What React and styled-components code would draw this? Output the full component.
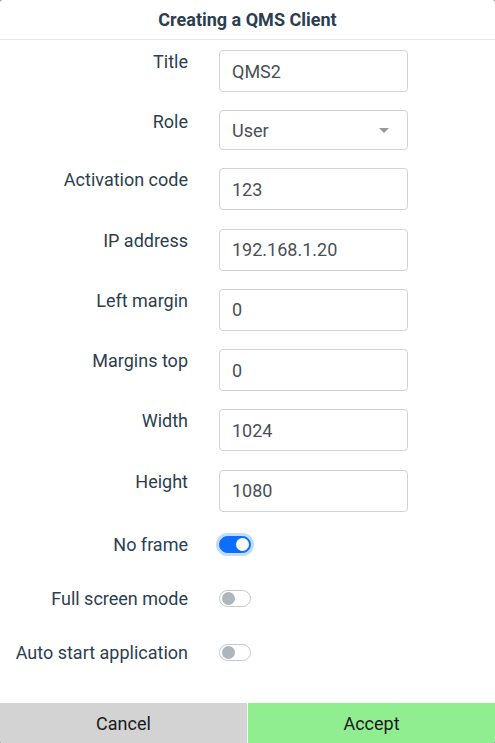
import React from 'react';
import styled, { createGlobalStyle } from 'styled-components';

const GlobalStyle = createGlobalStyle`
  html, body {
    margin: 0;
    padding: 0;
    background: #9a9a9a;
  }
  body {
    font-family: Roboto, "Liberation Sans", sans-serif;
    color: #2c3e50;
  }
  * {
    box-sizing: border-box;
  }
`;

// Styled components
const Card = styled.div`
  width: 495px;
  height: 743px;
  display: flex;
  flex-direction: column;
  background: #fff;
  border-radius: 3px;
  overflow: hidden;
`;

const Header = styled.div`
  height: 40px;
  flex-shrink: 0;
  display: flex;
  align-items: center;
  justify-content: center;
  border-bottom: 1px solid #e6e8eb;
  font-size: 18px;
  font-weight: 700;
  color: #2c3e50;
`;

const Body = styled.div`
  flex: 1;
  display: grid;
  grid-template-columns: 188px 189px;
  column-gap: 31px;
  align-content: start;
  padding-top: 10px;
`;

const Label = styled.label`
  text-align: right;
  font-size: 18px;
  line-height: 24px;
  color: #2c3e50;
  align-self: ${(p) => (p.$center ? 'center' : 'start')};
`;

const Input = styled.input`
  height: 42px;
  width: 189px;
  margin-bottom: ${(p) => p.$gap}px;
  padding: 0 12px;
  border: 1px solid #ced4da;
  border-radius: 4px;
  font-family: Roboto, "Liberation Sans", sans-serif;
  font-size: 18px;
  color: #495057;
  outline: none;
`;

const SelectBox = styled.div`
  height: 40px;
  width: 189px;
  margin-bottom: 18px;
  padding: 0 12px;
  display: flex;
  align-items: center;
  justify-content: space-between;
  border: 1px solid #ced4da;
  border-radius: 4px;
  font-size: 18px;
  color: #495057;
`;

const Caret = styled.span`
  width: 0;
  height: 0;
  margin-right: 6px;
  border-left: 5px solid transparent;
  border-right: 5px solid transparent;
  border-top: 5px solid #999;
`;

const SwitchCell = styled.div`
  height: 54px;
  display: flex;
  align-items: center;
`;

const Switch = styled.span`
  position: relative;
  width: 32px;
  height: 17px;
  border-radius: 9px;
  border: 1px solid ${(p) => (p.$on ? '#0d6efd' : '#c4c8cc')};
  background: ${(p) => (p.$on ? '#0d6efd' : '#fff')};
  box-shadow: ${(p) => (p.$on ? '0 0 0 3px rgba(13, 110, 253, 0.25)' : 'none')};

  &::after {
    content: '';
    position: absolute;
    top: 1px;
    left: ${(p) => (p.$on ? '16px' : '2px')};
    width: 13px;
    height: 13px;
    border-radius: 50%;
    background: ${(p) => (p.$on ? '#fff' : '#adb5bd')};
  }
`;

const Footer = styled.div`
  height: 40px;
  flex-shrink: 0;
  display: grid;
  grid-template-columns: 247px 1fr;
  column-gap: 1px;
`;

const Button = styled.button`
  border: none;
  background: ${(p) => p.$bg};
  font-family: Roboto, "Liberation Sans", sans-serif;
  font-size: 18px;
  color: #1a1a1a;
`;

const fields = [
  ['Title', 'QMS2'],
  ['Role', null],
  ['Activation code', '123'],
  ['IP address', '192.168.1.20'],
  ['Left margin', '0'],
  ['Margins top', '0'],
  ['Width', '1024'],
  ['Height', '1080'],
];

const switches = [
  ['No frame', true],
  ['Full screen mode', false],
  ['Auto start application', false],
];

const App = () => {
  return (
    <>
      <GlobalStyle />
      <Card>
        <Header>Creating a QMS Client</Header>
        <Body>
          {fields.map(([label, value], i) => (
            <React.Fragment key={label}>
              <Label>{label}</Label>
              {value === null ? (
                <SelectBox>
                  User
                  <Caret />
                </SelectBox>
              ) : (
                <Input defaultValue={value} $gap={i === 7 ? 6 : 18.3} />
              )}
            </React.Fragment>
          ))}
          {switches.map(([label, on]) => (
            <React.Fragment key={label}>
              <Label $center>{label}</Label>
              <SwitchCell>
                <Switch $on={on} />
              </SwitchCell>
            </React.Fragment>
          ))}
        </Body>
        <Footer>
          <Button $bg="#d3d3d3">Cancel</Button>
          <Button $bg="#90ee90">Accept</Button>
        </Footer>
      </Card>
    </>
  );
};

export default App;
